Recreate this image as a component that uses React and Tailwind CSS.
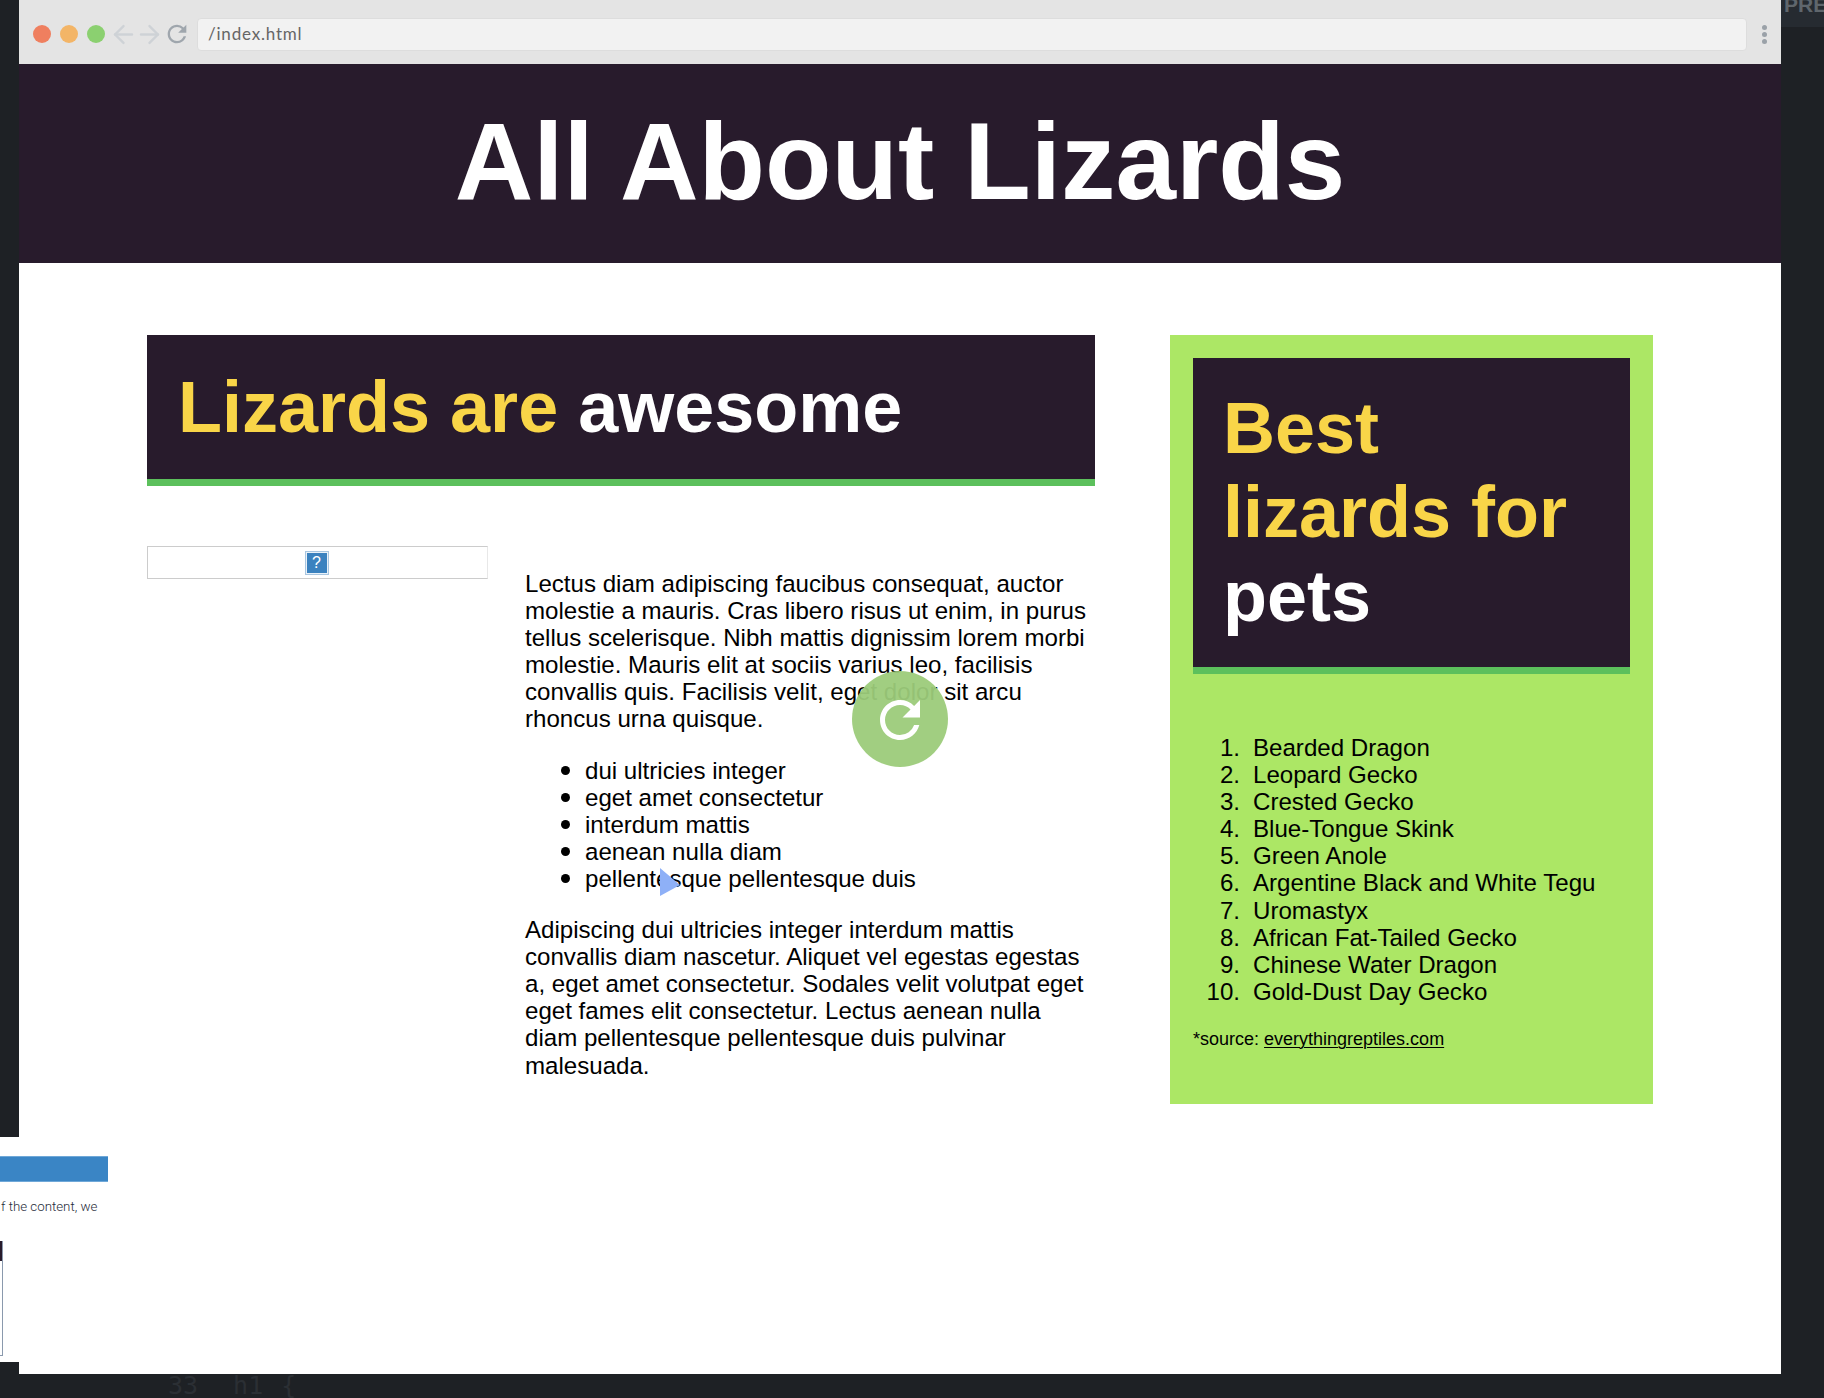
import { ArrowLeft, ArrowRight } from "lucide-react";
import { MdRefresh } from "react-icons/md";

const sans = "font-['Liberation_Sans',Arial,sans-serif]";

const lizards = [
  "Bearded Dragon",
  "Leopard Gecko",
  "Crested Gecko",
  "Blue-Tongue Skink",
  "Green Anole",
  "Argentine Black and White Tegu",
  "Uromastyx",
  "African Fat-Tailed Gecko",
  "Chinese Water Dragon",
  "Gold-Dust Day Gecko",
];

const bullets = [
  "dui ultricies integer",
  "eget amet consectetur",
  "interdum mattis",
  "aenean nulla diam",
  "pellentesque pellentesque duis",
];

const BrowserBar = () => (
  <div className="h-[64px] bg-[#e4e4e4] flex items-center pl-[14px] pr-[14px] pt-[4px]">
    <div className="flex gap-[9px]">
      <span className="w-[18px] h-[18px] rounded-full bg-[#ef7f5f]" />
      <span className="w-[18px] h-[18px] rounded-full bg-[#f3b567]" />
      <span className="w-[18px] h-[18px] rounded-full bg-[#8bd070]" />
    </div>
    <ArrowLeft className="ml-[4px] w-[29px] h-[29px] text-[#ced2d6]" strokeWidth={2} />
    <ArrowRight className="ml-[-3px] w-[29px] h-[29px] text-[#ced2d6]" strokeWidth={2} />
    <MdRefresh className="ml-[-1px] w-[28px] h-[28px] text-[#9fa6ad]" />
    <div className="ml-[6px] flex-1 h-[33px] rounded-[4px] bg-[#f2f2f2] border border-[#dddddd] flex items-center pl-[10px] font-['Lato',sans-serif] text-[17px] tracking-[0.8px] text-[#666666]">
      /index.html
    </div>
    <div className="ml-[15px] flex flex-col gap-[2px]">
      <span className="w-[5px] h-[5px] rounded-full bg-[#9aa1a8]" />
      <span className="w-[5px] h-[5px] rounded-full bg-[#9aa1a8]" />
      <span className="w-[5px] h-[5px] rounded-full bg-[#9aa1a8]" />
    </div>
  </div>
);

const Article = () => (
  <div className="w-[948px]">
    <h2 className="h-[151px] bg-[#281b2c] border-b-[7px] border-[#5cc05c] pl-[31px] pt-[30px] text-[72px] leading-[84px] font-bold text-[#f9d548]">
      Lizards are <span className="text-white">awesome</span>
    </h2>
    <div className="flex mt-[60px]">
      <div className="w-[341px] h-[33px] border border-[#cccccc] border-r-[#e8e8e8] pr-[2px] flex items-center justify-center shrink-0">
        <span className="w-[24px] h-[24px] border border-[#a9c6e0] bg-[#e9f1f8] p-[1px] flex">
          <span className="flex-1 bg-[#3b82bf] flex items-center justify-center text-white text-[16px] leading-none">
            ?
          </span>
        </span>
      </div>
      <div className="ml-[37px] mt-[24px] text-[24.1px] leading-[27.1px] text-black">
        <p>
          Lectus diam adipiscing faucibus consequat, auctor molestie a mauris. Cras libero risus ut enim, in purus tellus scelerisque. Nibh mattis dignissim lorem morbi molestie. Mauris elit at sociis varius leo, facilisis convallis quis. Facilisis velit, eget dolor sit arcu rhoncus urna quisque.
        </p>
        <ul className="pl-[36px] my-[24px]">
          {bullets.map((b) => (
            <li key={b} className="flex items-center">
              <span className="w-[9px] h-[9px] rounded-full bg-black mr-[15px] shrink-0" />
              {b}
            </li>
          ))}
        </ul>
        <p>
          Adipiscing dui ultricies integer interdum mattis convallis diam nascetur. Aliquet vel egestas egestas a, eget amet consectetur. Sodales velit volutpat eget eget fames elit consectetur. Lectus aenean nulla diam pellentesque pellentesque duis pulvinar malesuada.
        </p>
      </div>
    </div>
  </div>
);

const Sidebar = () => (
  <aside className="w-[483px] h-[769px] bg-[#ace765] p-[23px]">
    <h2 className="h-[316px] bg-[#281b2c] border-b-[7px] border-[#5cc05c] pl-[30px] pt-[28px] text-[72px] leading-[84px] font-bold text-[#f9d548]">
      Best
      <br />
      lizards for
      <br />
      <span className="text-white">pets</span>
    </h2>
    <ol className="mt-[60px] text-[24.1px] leading-[27.1px] text-black">
      {lizards.map((l, i) => (
        <li key={l} className="flex">
          <span className="w-[47px] mr-[13px] text-right shrink-0">{i + 1}.</span>
          {l}
        </li>
      ))}
    </ol>
    <p className="mt-[23px] text-[18px] leading-[22px] text-black">
      *source: <a className="underline decoration-[1px] underline-offset-2">everythingreptiles.com</a>
    </p>
  </aside>
);

const App = () => (
  <div className={`relative w-[1824px] h-[1398px] overflow-hidden bg-[#1e2125] ${sans}`}>
    <div className="ml-[19px] w-[1762px] h-[1374px] bg-white">
      <BrowserBar />
      <header className="h-[199px] bg-[#281b2c] text-white text-center text-[108.8px] leading-[196px] font-bold">
        All About Lizards
      </header>
      <main className="flex pl-[128px] pt-[72px]">
        <Article />
        <div className="ml-[75px]">
          <Sidebar />
        </div>
      </main>
    </div>

    {/* stray bits of the editor behind the browser window */}
    <div className="absolute left-0 top-[1137px] w-[19px] h-[225px] bg-white" />
    <div className="absolute left-0 top-[1156px] w-[108px] h-[26px] bg-[#3a85c5] border-y border-[#6fa8d8]" />
    <p className="absolute left-[1px] top-[1199px] font-['Roboto',sans-serif] text-[13.3px] leading-[16px] font-light text-[#1f2d3a]">
      f the content, we
    </p>
    <div className="absolute left-0 top-[1241px] w-[3px] h-[115px] border-r border-b border-[#8a99ad]">
      <div className="h-[20px] bg-[#281b2c]" />
    </div>
    <div className="absolute left-[168px] top-[1372px] flex font-['DejaVu_Sans_Mono',monospace] text-[25px] leading-[28px] text-[#2b2f34]">
      <span>33</span>
      <span className="ml-[35px]">h1</span>
      <span className="ml-[18px]">{"{"}</span>
    </div>
    <div className="absolute left-[1781px] top-0 w-[43px] h-[27px] bg-[#262b31] overflow-hidden">
      <span className="absolute left-[3px] top-[-7px] text-[21px] font-bold leading-[24px] text-[#5f666c]">
        PRE
      </span>
    </div>

    {/* preview overlays */}
    <div className="absolute left-[852px] top-[671px] w-[96px] h-[96px] rounded-full bg-[#9ccb7a]/95 flex items-center justify-center">
      <MdRefresh className="mt-[1px] w-[60px] h-[60px] text-white" />
    </div>
    <svg className="absolute left-[659px] top-[868px]" width="22" height="28" viewBox="0 0 22 28">
      <path d="M1 0 L21 17 L1 28 Z" fill="#8eb0f7" />
    </svg>
  </div>
);

export default App;
